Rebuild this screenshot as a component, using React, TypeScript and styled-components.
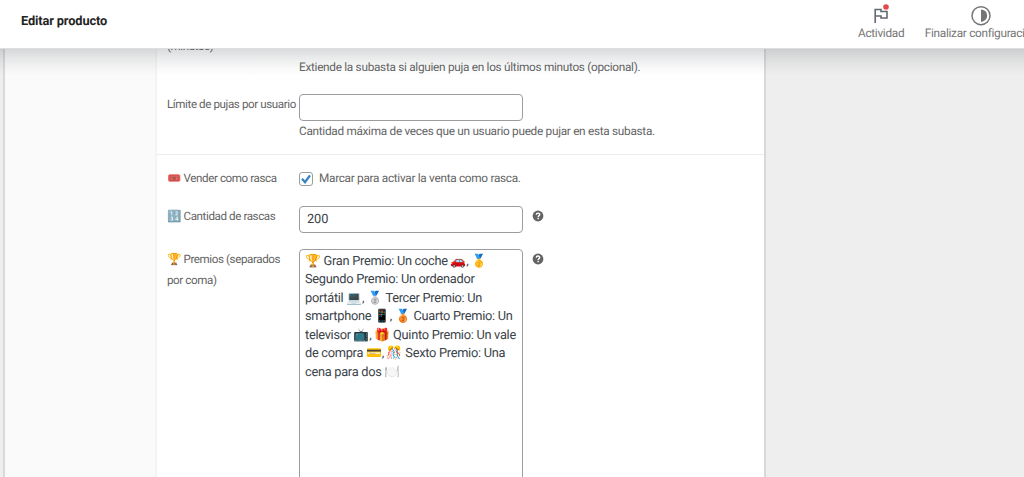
import React from "react";
import styled, { createGlobalStyle } from "styled-components";

const GlobalStyle = createGlobalStyle`
  * { box-sizing: border-box; }
  body {
    margin: 0;
    overflow: hidden;
    background: #eee;
    font-family: Roboto, "Noto Color Emoji", sans-serif;
    color: #646464;
    text-rendering: geometricPrecision;
  }
`;

const Page = styled.div`
  height: 477px;
  display: flex;
  flex-direction: column;
  overflow: hidden;
`;

const Header = styled.header`
  position: relative;
  z-index: 1;
  flex: none;
  height: 48px;
  padding: 0 0 0 21px;
  display: flex;
  justify-content: space-between;
  background: #fff;
  box-shadow: 0 1px 0 #dedfe1;
  &::after {
    content: "";
    position: absolute;
    left: 0;
    right: 0;
    top: 49px;
    height: 27px;
    background: linear-gradient(rgba(60, 65, 75, 0.19), rgba(60, 65, 75, 0.1) 35%, rgba(60, 65, 75, 0.03) 72%, transparent);
  }
`;

const Title = styled.h1`
  margin: 0;
  font-size: 12.8px;
  font-weight: 700;
  letter-spacing: -0.13px;
  line-height: 44px;
  color: #242424;
`;

const Activity = styled.nav`
  width: 166px;
  display: flex;
  gap: 20.5px;
  overflow: hidden;
`;

const ActivityButton = styled.div`
  flex: none;
  display: flex;
  flex-direction: column;
  align-items: center;
  padding-top: 4px;
  font-size: 11.8px;
  letter-spacing: -0.29px;
  line-height: 14px;
  color: #757575;
  white-space: nowrap;
  svg { display: block; margin-bottom: -1px; }
`;

const Workspace = styled.main`
  flex: 1;
  min-height: 0;
  padding-left: 3px;
  display: flex;
`;

const Panel = styled.section`
  width: 763px;
  display: flex;
  border: solid #d8d9db;
  border-width: 0 2px;
  background: #fff;
`;

const Tabs = styled.aside`
  width: 152px;
  flex: none;
  background: #fafafa;
  border-right: 2px solid #f4f4f4;
`;

const Fields = styled.div`
  flex: 1;
  min-width: 0;
`;

const Group = styled.div<{ $height: number }>`
  height: ${(p) => p.$height}px;
  border-bottom: 1px solid #ececec;
`;

const Row = styled.div<{ $height: number }>`
  height: ${(p) => p.$height}px;
  display: flex;
  align-items: flex-start;
  padding-left: 10px;
`;

const Label = styled.label<{ $top: number }>`
  flex: none;
  width: 132px;
  margin-top: ${(p) => p.$top}px;
  font-size: 11.6px;
  letter-spacing: -0.4px;
  line-height: 21px;
  white-space: nowrap;
`;

const Control = styled.div<{ $top: number }>`
  margin-top: ${(p) => p.$top}px;
`;

const Input = styled.div`
  width: 223.5px;
  height: 27px;
  padding: 0 7px;
  border: 1px solid #9b9ca0;
  border-radius: 4px;
  background: #fff;
  font-size: 12.8px;
  letter-spacing: -0.1px;
  line-height: 25px;
  color: #3c434a;
`;

const Hint = styled.div`
  font-size: 11.8px;
  letter-spacing: -0.29px;
  line-height: 20px;
  white-space: nowrap;
`;

const Checkbox = styled.span`
  flex: none;
  width: 14px;
  height: 14px;
  margin: 17px 6px 0 0;
  border: 1px solid #9b9ca0;
  border-radius: 3px;
  svg { display: block; }
`;

const TextArea = styled.div`
  width: 223.5px;
  height: 260px;
  padding: 2.6px 5px;
  border: 1px solid #9b9ca0;
  border-radius: 4px;
  font-size: 12.8px;
  letter-spacing: -0.28px;
  line-height: 18.5px;
  color: #3c434a;
  white-space: nowrap;
`;

const Help = styled.span<{ $top: number }>`
  margin: ${(p) => p.$top}px 0 0 9.5px;
  svg { display: block; }
`;

const HelpIcon = ({ top }: { top: number }) => (
  <Help $top={top}>
    <svg width="12" height="12" viewBox="0 0 12 12">
      <circle cx="6" cy="6" r="5.4" fill="#646464" />
      <path d="M4.3 4.7C4.3 2.5 7.8 2.6 7.7 4.6C7.6 5.7 6.2 5.6 6.2 7" fill="none" stroke="#fff" strokeWidth="1.4" />
      <rect x="5.4" y="7.8" width="1.5" height="1.4" fill="#fff" />
    </svg>
  </Help>
);

const prizes = [
  "🏆 Gran Premio: Un coche 🚗, 🥇",
  "Segundo Premio: Un ordenador",
  "portátil 💻, 🥈 Tercer Premio: Un",
  "smartphone 📱, 🥉 Cuarto Premio: Un",
  "televisor 📺, 🎁 Quinto Premio: Un vale",
  "de compra 💳, 🎊 Sexto Premio: Una",
  "cena para dos 🍽️",
];

export default function App() {
  return (
    <Page>
      <GlobalStyle />
      <Header>
        <Title>Editar producto</Title>
        <Activity>
          <ActivityButton>
            <svg width="24" height="23" viewBox="0 0 24 23">
              <path d="M6.2 19V5.5H12V7.5H18V14H12V12H6.2" fill="none" stroke="#646970" strokeWidth="1.6" />
              <circle cx="17" cy="3" r="2.8" fill="#e04b4f" />
            </svg>
            Actividad
          </ActivityButton>
          <ActivityButton>
            <svg width="24" height="23" viewBox="0 0 24 23">
              <circle cx="12" cy="11.7" r="9" fill="none" stroke="#757575" strokeWidth="1.5" />
              <path d="M12 5.5a6.2 6.2 0 0 1 0 12.4z" fill="#757575" />
            </svg>
            Finalizar configuración
          </ActivityButton>
        </Activity>
      </Header>
      <Workspace>
        <Panel>
          <Tabs />
          <Fields>
            <Group $height={107}>
              <Row $height={46}>
                <Label $top={-12}>(minutos)</Label>
                <Control $top={9}>
                  <Hint>Extiende la subasta si alguien puja en los últimos minutos (opcional).</Hint>
                </Control>
              </Row>
              <Row $height={60}>
                <Label $top={0}>Límite de pujas por usuario</Label>
                <Control $top={0}>
                  <Input />
                  <Hint>Cantidad máxima de veces que un usuario puede pujar en esta subasta.</Hint>
                </Control>
              </Row>
            </Group>
            <Row $height={51}>
              <Label $top={13}>🎟️ Vender como rasca</Label>
              <Checkbox>
                <svg width="12" height="12" viewBox="0 0 12 12">
                  <path d="M2 5.8L5 9.2L10 2.4" fill="none" stroke="#3582c4" strokeWidth="2.3" />
                </svg>
              </Checkbox>
              <Control $top={13}>
                <Hint>Marcar para activar la venta como rasca.</Hint>
              </Control>
            </Row>
            <Row $height={43}>
              <Label $top={0}>🔢 Cantidad de rascas</Label>
              <Input>200</Input>
              <HelpIcon top={4} />
            </Row>
            <Row $height={260}>
              <Label $top={0}>
                🏆 Premios (separados
                <br />
                por coma)
              </Label>
              <TextArea>
                {prizes.map((line) => (
                  <div key={line}>{line}</div>
                ))}
              </TextArea>
              <HelpIcon top={4} />
            </Row>
          </Fields>
        </Panel>
      </Workspace>
    </Page>
  );
}
